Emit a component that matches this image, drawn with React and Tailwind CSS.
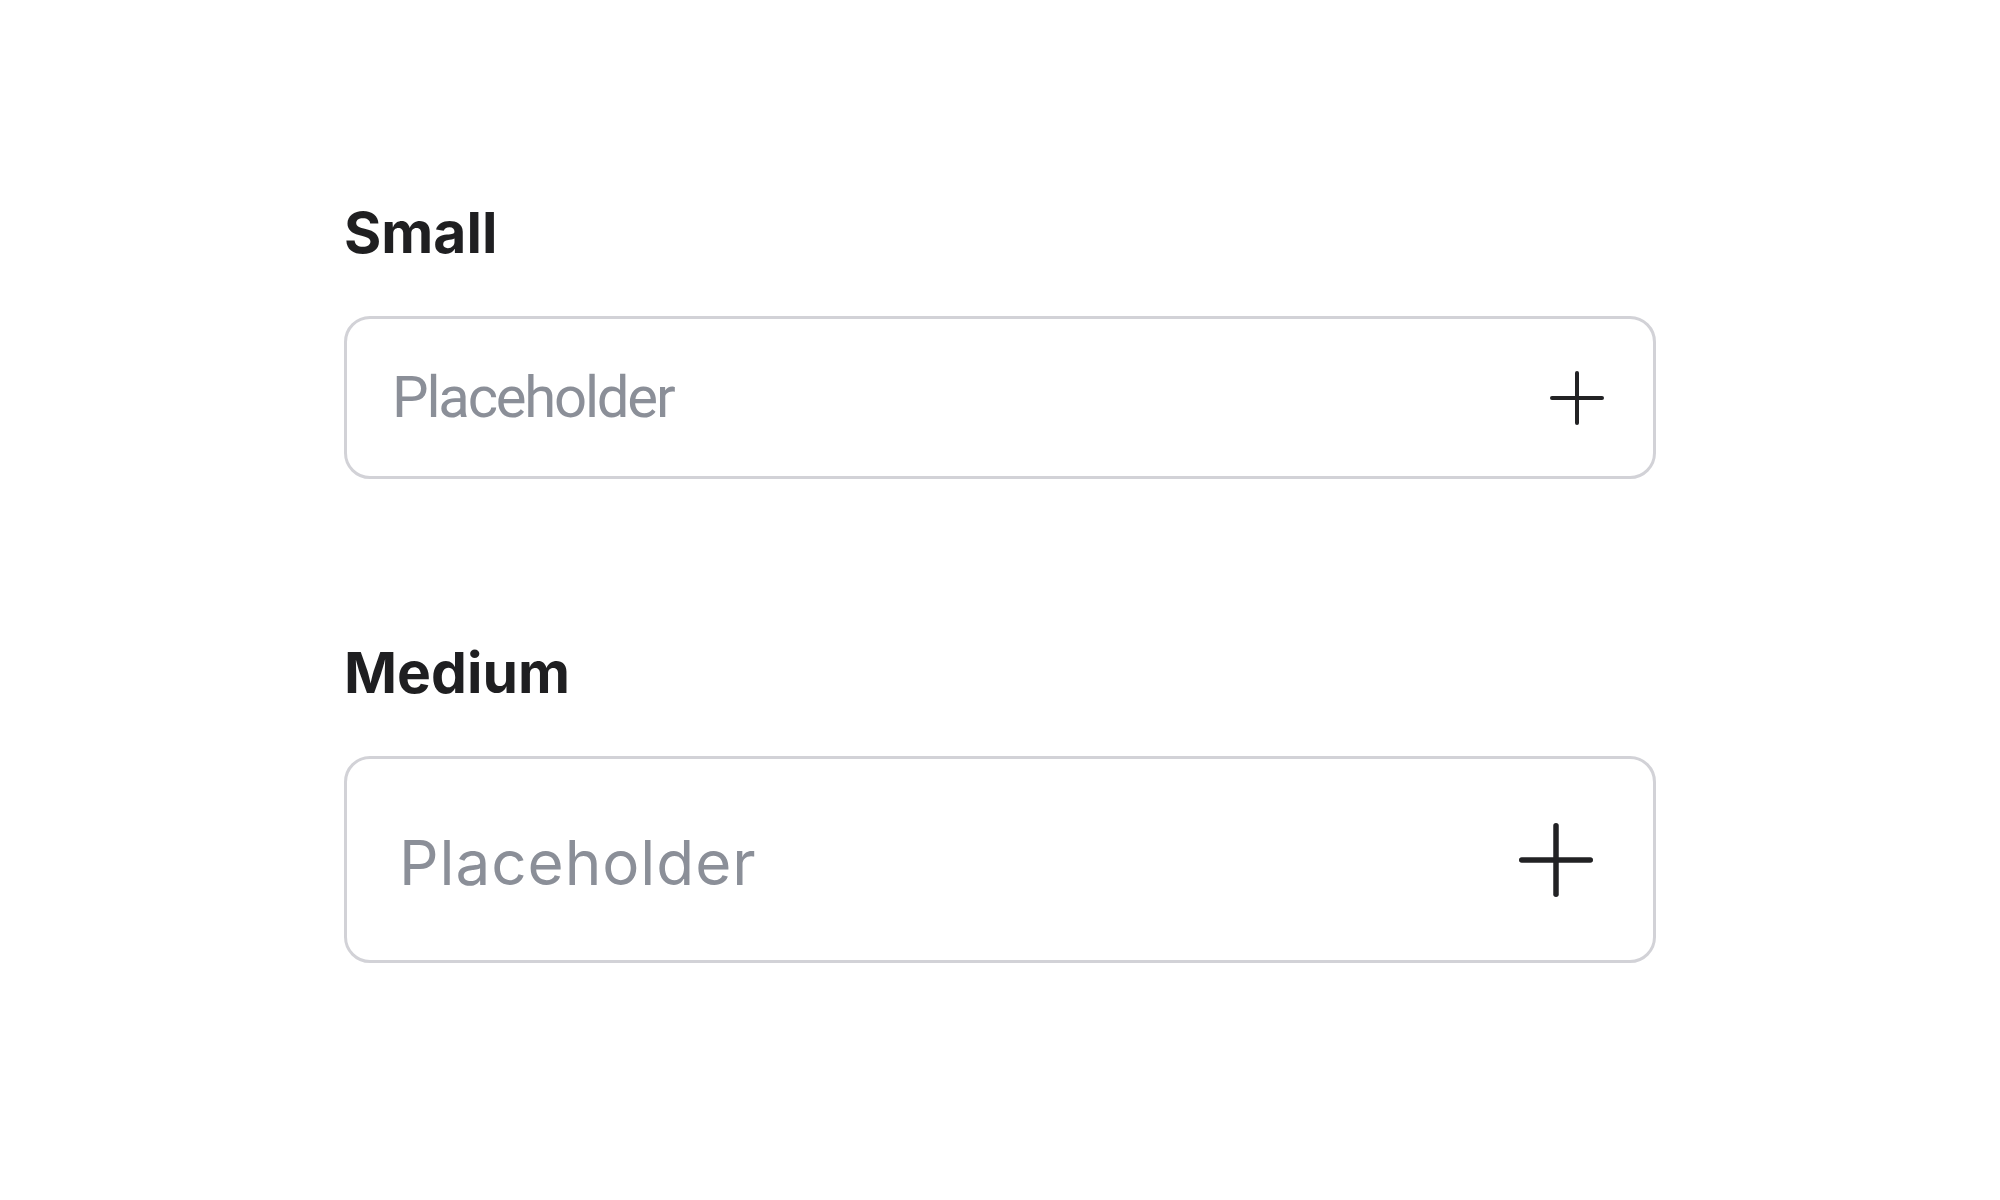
import React from 'react';

function PlusIcon({ size, stroke }) {
  const s = size;
  const h = stroke / 2;
  return (
    <svg width={s} height={s} viewBox={`0 0 ${s} ${s}`} fill="none" className="shrink-0">
      <line x1={h} y1={s / 2} x2={s - h} y2={s / 2} stroke="#222224" strokeWidth={stroke} strokeLinecap="round" />
      <line x1={s / 2} y1={h} x2={s / 2} y2={s - h} stroke="#222224" strokeWidth={stroke} strokeLinecap="round" />
    </svg>
  );
}

export default function App() {
  return (
    <div className="min-h-screen bg-white font-['Inter','Noto_Sans',sans-serif]">
      <div className="mx-auto w-[1312px] pt-[205px]">
        {/* Small */}
        <section>
          <h2 className="text-[57px] leading-[56px] font-bold text-[#1f1f21]">Small</h2>
          <div className="mt-[55px] flex h-[163px] items-center rounded-[26px] border-[3px] border-[#d2d2d7] bg-white pl-[45px] pr-[49px]">
            <input
              type="text"
              placeholder="Placeholder"
              className="min-w-0 flex-1 bg-transparent font-['Roboto',sans-serif] text-[58px] tracking-[-0.038em] text-[#1f1f21] outline-none placeholder:text-[#8b8f98]"
            />
            <PlusIcon size={54} stroke={4} />
          </div>
        </section>

        {/* Medium */}
        <section className="mt-[166px]">
          <h2 className="text-[57px] leading-[56px] font-bold text-[#1f1f21]">Medium</h2>
          <div className="mt-[55px] flex h-[207px] items-center rounded-[26px] border-[3px] border-[#d2d2d7] bg-white pl-[52px] pr-[60px]">
            <input
              type="text"
              placeholder="Placeholder"
              className="min-w-0 flex-1 bg-transparent pt-[5px] text-[62px] tracking-[0.015em] text-[#1f1f21] outline-none placeholder:text-[#8b8f98]"
            />
            <PlusIcon size={74} stroke={5.5} />
          </div>
        </section>
      </div>
    </div>
  );
}
